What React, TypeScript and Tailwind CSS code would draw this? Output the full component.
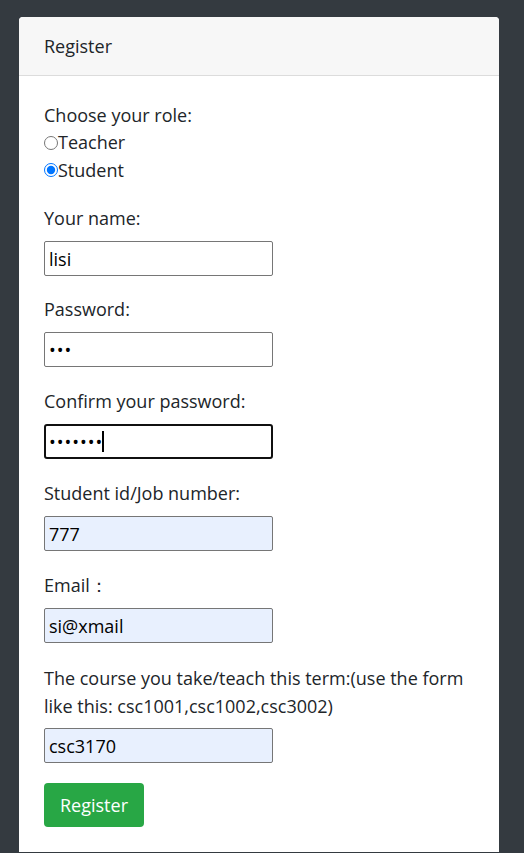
import React from "react";

const font = { fontFamily: '"Open Sans", "Noto Sans", sans-serif' };

function Field({ label, value, type = "text", filled = false, gap = "mb-[20px]" }: { label: string; value: string; type?: string; filled?: boolean; gap?: string }) {
  return (
    <div className={gap}>
      <label className="block leading-[28px] mb-[9px]">{label}</label>
      <input
        type={type}
        readOnly
        value={value}
        className={
          "block w-[229px] h-[35px] px-[4px] border border-[#767676] rounded-[2px] text-black text-[18px] outline-none " +
          (type === "password" ? "tracking-[1px] " : "") +
          (filled ? "bg-[#e8f0fe]" : "bg-white")
        }
      />
    </div>
  );
}

export default function App() {
  return (
    <div className="min-h-[853px] bg-[#343a40] pt-[17px] px-[19px] text-[18px] text-[#212529]" style={font}>
      <div className="w-[480px] bg-white rounded-t-[4px] overflow-hidden">
        {/* header */}
        <div className="h-[59px] bg-[#f7f7f7] border-b border-[#dcdcdc] px-[25px] flex items-center">
          <span className="leading-[28px]">Register</span>
        </div>

        {/* form */}
        <div className="px-[25px] pt-[26px] pb-[25px]">
          <div className="mb-[20px]">
            <p className="leading-[27px]">Choose your role:</p>
            <label className="flex items-center leading-[27px]">
              <input type="radio" name="role" className="m-0 w-[14px] h-[14px]" />
              Teacher
            </label>
            <label className="flex items-center leading-[28px]">
              <input type="radio" name="role" defaultChecked className="m-0 w-[14px] h-[14px]" />
              Student
            </label>
          </div>

          <Field label="Your name:" value="lisi" gap="mb-[19px]" />
          <Field label="Password:" value="abc" type="password" />

          <div className="mb-[20px]">
            <label className="block leading-[28px] mb-[9px]">Confirm your password:</label>
            <div className="relative w-[229px]">
              <input
                type="password"
                readOnly
                value="abcdefg"
                className="block w-[229px] h-[35px] px-[3px] border-2 border-[#101010] rounded-[3px] bg-white text-black text-[18px] tracking-[1px] outline-none"
              />
              <span className="absolute left-[58px] top-[7px] w-[2px] h-[21px] bg-black" />
            </div>
          </div>

          <Field label="Student id/Job number:" value="777" filled />
          <Field label="Email：" value="si@xmail" filled gap="mb-[21px]" />

          <div className="mb-[20px]">
            <label className="block leading-[28px] mb-[8px]">
              The course you take/teach this term:(use the form like this: csc1001,csc1002,csc3002)
            </label>
            <input
              type="text"
              readOnly
              value="csc3170"
              className="block w-[229px] h-[35px] px-[4px] border border-[#767676] rounded-[2px] bg-[#e8f0fe] text-black text-[18px] outline-none"
            />
          </div>

          <button className="h-[44px] px-[16px] bg-[#28a745] text-white rounded-[4px] leading-[28px]">Register</button>
        </div>
      </div>
    </div>
  );
}
